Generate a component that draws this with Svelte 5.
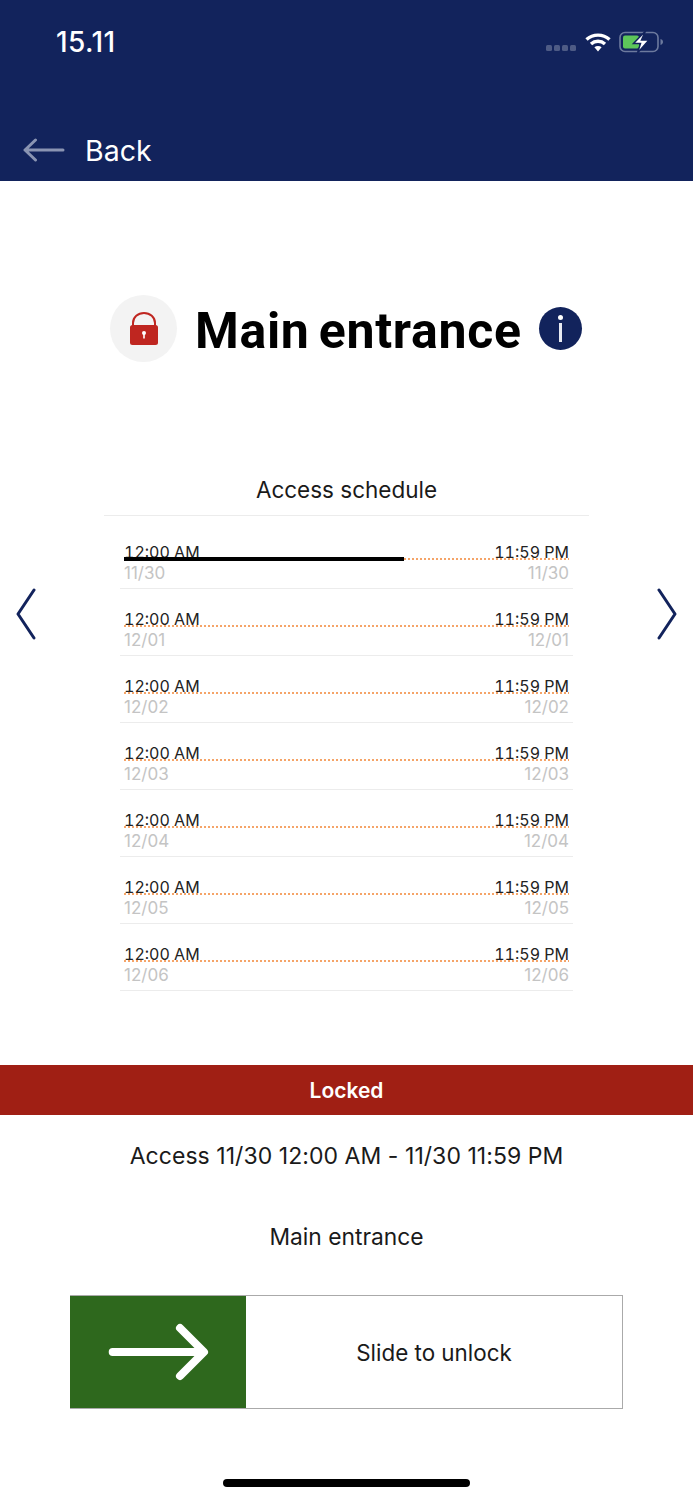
<script lang="ts">
  // One row per day of the access schedule
  const days = [
    { date: '11/30', progress: 63 },
    { date: '12/01', progress: 0 },
    { date: '12/02', progress: 0 },
    { date: '12/03', progress: 0 },
    { date: '12/04', progress: 0 },
    { date: '12/05', progress: 0 },
    { date: '12/06', progress: 0 }
  ];
</script>

<div class="page">
  <header class="top">
    <div class="status">
      <span class="clock">15.11</span>
      <div class="status-icons">
        <span class="signal"><i></i><i></i><i></i><i></i></span>
        <svg class="wifi" width="26" height="20" viewBox="0 0 26 20" fill="none" stroke="#fff" stroke-width="3.4">
          <path d="M1.500 7.500C8 1.600 18 1.600 24.500 7.500" />
          <path d="M6 12c4-3.600 10-3.600 14 0" />
          <path d="M13 19.500l-3.600-4.200c2-1.600 5.200-1.600 7.200 0z" fill="#fff" stroke="none" />
        </svg>
        <svg class="battery" width="46" height="22" viewBox="0 0 46 22" fill="none">
          <rect x="1" y="1.500" width="38" height="19" rx="5" stroke="#6d7a9e" stroke-width="1.600" />
          <rect x="4" y="4.500" width="16" height="13" rx="2" fill="#5dc65a" />
          <path d="M41.500 8v6c1.600-.4 2.500-1.600 2.500-3s-.9-2.600-2.500-3z" fill="#6d7a9e" />
          <path d="M26.500 0L14.500 12.500h7L18.500 22l11.500-13h-7.500z" fill="#fff" stroke="#12235c" stroke-width="1.500" />
        </svg>
      </div>
    </div>
    <div class="back">
      <svg width="42" height="24" viewBox="0 0 42 24" fill="none" stroke="#8a94b2" stroke-width="3" stroke-linecap="round" stroke-linejoin="round">
        <path d="M40 12H2M12.500 2L2 12l10.500 10" />
      </svg>
      <span>Back</span>
    </div>
  </header>

  <section class="title-row">
    <span class="lock-badge">
      <svg width="30" height="34" viewBox="0 0 30 34">
        <path d="M4 16V11C4 5 9 1 15 1S26 5 26 11V16" fill="none" stroke="#bf2620" stroke-width="2" />
        <rect x="1" y="13" width="28" height="20" rx="2.500" fill="#bf2620" />
        <circle cx="15" cy="21" r="2" fill="#fff" />
        <rect x="14.200" y="21" width="1.600" height="5.500" fill="#fff" />
      </svg>
    </span>
    <h1>Main entrance</h1>
    <span class="info"><b></b><i></i></span>
  </section>

  <section class="schedule">
    <h2>Access schedule</h2>
    <div class="carousel">
      <svg class="chevron" width="22" height="52" viewBox="0 0 22 52" fill="none" stroke="#12235c" stroke-width="3" stroke-linecap="round" stroke-linejoin="round">
        <path d="M19 2L3 26l16 24" />
      </svg>
      <ul>
        {#each days as day}
          <li>
            <div class="times"><span>12:00 AM</span><span>11:59 PM</span></div>
            <div class="track">
              {#if day.progress}
                <div class="fill" style="width: {day.progress}%"></div>
              {/if}
            </div>
            <div class="dates"><span>{day.date}</span><span>{day.date}</span></div>
          </li>
        {/each}
      </ul>
      <svg class="chevron" width="22" height="52" viewBox="0 0 22 52" fill="none" stroke="#12235c" stroke-width="3" stroke-linecap="round" stroke-linejoin="round">
        <path d="M3 2l16 24L3 50" />
      </svg>
    </div>
  </section>

  <div class="state">Locked</div>
  <p class="access">Access 11/30 12:00 AM - 11/30 11:59 PM</p>
  <p class="door">Main entrance</p>

  <div class="slider">
    <div class="knob">
      <svg width="102" height="60" viewBox="0 0 102 60" fill="none" stroke="#fff" stroke-width="8" stroke-linecap="round" stroke-linejoin="round">
        <path d="M5.700 30H96M73 6l24 24L73 54" />
      </svg>
    </div>
    <span class="slide-label">Slide to unlock</span>
  </div>

  <div class="home-bar"></div>
</div>

<style>
  :global(body) {
    margin: 0;
    background: #fff;
  }

  .page {
    display: flex;
    flex-direction: column;
    width: 693px;
    height: 1500px;
    font-family: Inter, "Liberation Sans", sans-serif;
    color: #1a1a1a;
    overflow: hidden;
  }

  .top {
    height: 181px;
    background: #12235c;
    color: #fff;
    flex-shrink: 0;
  }

  .status {
    display: flex;
    align-items: center;
    justify-content: space-between;
    height: 84px;
    padding: 0 28px 0 56px;
  }

  .clock {
    font-size: 28px;
    font-weight: 500;
    letter-spacing: 0.4px;
  }

  .status-icons {
    display: flex;
    align-items: center;
  }

  .signal {
    display: flex;
    gap: 2px;
    margin: 11px 9px 0 0;
  }

  .signal i {
    width: 6px;
    height: 6px;
    border-radius: 1.500px;
    background: #4e5b85;
  }

  .wifi {
    margin-right: 8px;
  }

  .back {
    display: flex;
    align-items: center;
    gap: 20px;
    height: 44px;
    margin-top: 44px;
    padding-left: 23px;
    font-size: 28.500px;
  }

  .title-row {
    display: flex;
    align-items: center;
    height: 67px;
    margin-top: 114px;
    padding-left: 110px;
    flex-shrink: 0;
  }

  .lock-badge {
    display: flex;
    align-items: center;
    justify-content: center;
    width: 67px;
    height: 67px;
    border-radius: 50%;
    background: #f3f3f3;
    flex-shrink: 0;
  }

  h1 {
    margin: 4px 17px 0 18px;
    font-family: Roboto, sans-serif;
    font-size: 50px;
    font-weight: 700;
    letter-spacing: 0.7px;
    word-spacing: -4px;
    color: #000;
    white-space: nowrap;
  }

  .info {
    display: flex;
    flex-direction: column;
    align-items: center;
    gap: 3px;
    justify-content: center;
    width: 43px;
    height: 43px;
    border-radius: 50%;
    background: #12235c;
  }

  .info b {
    width: 5px;
    height: 5px;
    border-radius: 50%;
    background: #fff;
  }

  .info i {
    width: 3px;
    height: 19px;
    background: #e8eaf2;
  }

  .schedule {
    margin-top: 111px;
  }

  h2 {
    width: 485px;
    height: 42px;
    margin: 0 auto;
    border-bottom: 1px solid #ececec;
    font-size: 22.500px;
    font-weight: 400;
    line-height: 34px;
    text-align: center;
    color: #1a1a1a;
  }

  .carousel {
    display: flex;
    align-items: flex-start;
    justify-content: space-between;
    padding: 0 15px;
  }

  .chevron {
    margin-top: 72px;
  }

  ul {
    width: 453px;
    margin: 6px 0 0;
    padding: 0;
    list-style: none;
  }

  li {
    height: 67px;
    box-sizing: border-box;
    padding: 23px 4px 0;
    border-bottom: 1px solid #ececec;
  }

  .times,
  .dates {
    display: flex;
    justify-content: space-between;
  }

  .times {
    height: 13px;
    font-size: 16px;
    font-variant-numeric: tabular-nums;
    line-height: 15px;
    color: #222;
  }

  .track {
    position: relative;
    height: 2px;
    background: repeating-linear-gradient(to right, #f5a468 0, #f5a468 2px, transparent 2px, transparent 4px);
  }

  .fill {
    position: absolute;
    top: -1px;
    left: 0;
    height: 4px;
    background: #000;
  }

  .dates {
    height: 20px;
    margin-top: 3px;
    font-size: 17px;
    line-height: 20px;
    color: #c4c4c4;
  }

  .state {
    height: 50px;
    margin-top: 74px;
    background: #a01f14;
    color: #fff;
    font-size: 21px;
    font-weight: 600;
    line-height: 52px;
    text-align: center;
    flex-shrink: 0;
  }

  .access,
  .door {
    margin: 0;
    font-size: 23px;
    line-height: 30px;
    text-align: center;
  }

  .access {
    margin-top: 26px;
    letter-spacing: 0.05px;
  }

  .door {
    margin-top: 51px;
    font-size: 22.800px;
  }

  .slider {
    display: flex;
    align-items: center;
    box-sizing: border-box;
    width: 553px;
    height: 114px;
    margin: 43px 0 0 70px;
    border: 1px solid #aaa;
    border-left: 0;
    flex-shrink: 0;
  }

  .knob {
    display: flex;
    align-items: center;
    justify-content: center;
    width: 176px;
    height: 100%;
    background: #2e681d;
    flex-shrink: 0;
  }

  .slide-label {
    flex: 1;
    font-size: 22.400px;
    text-align: center;
  }

  .home-bar {
    width: 247px;
    height: 8px;
    margin: 70px auto 0;
    border-radius: 4px;
    background: #000;
    flex-shrink: 0;
  }
</style>
